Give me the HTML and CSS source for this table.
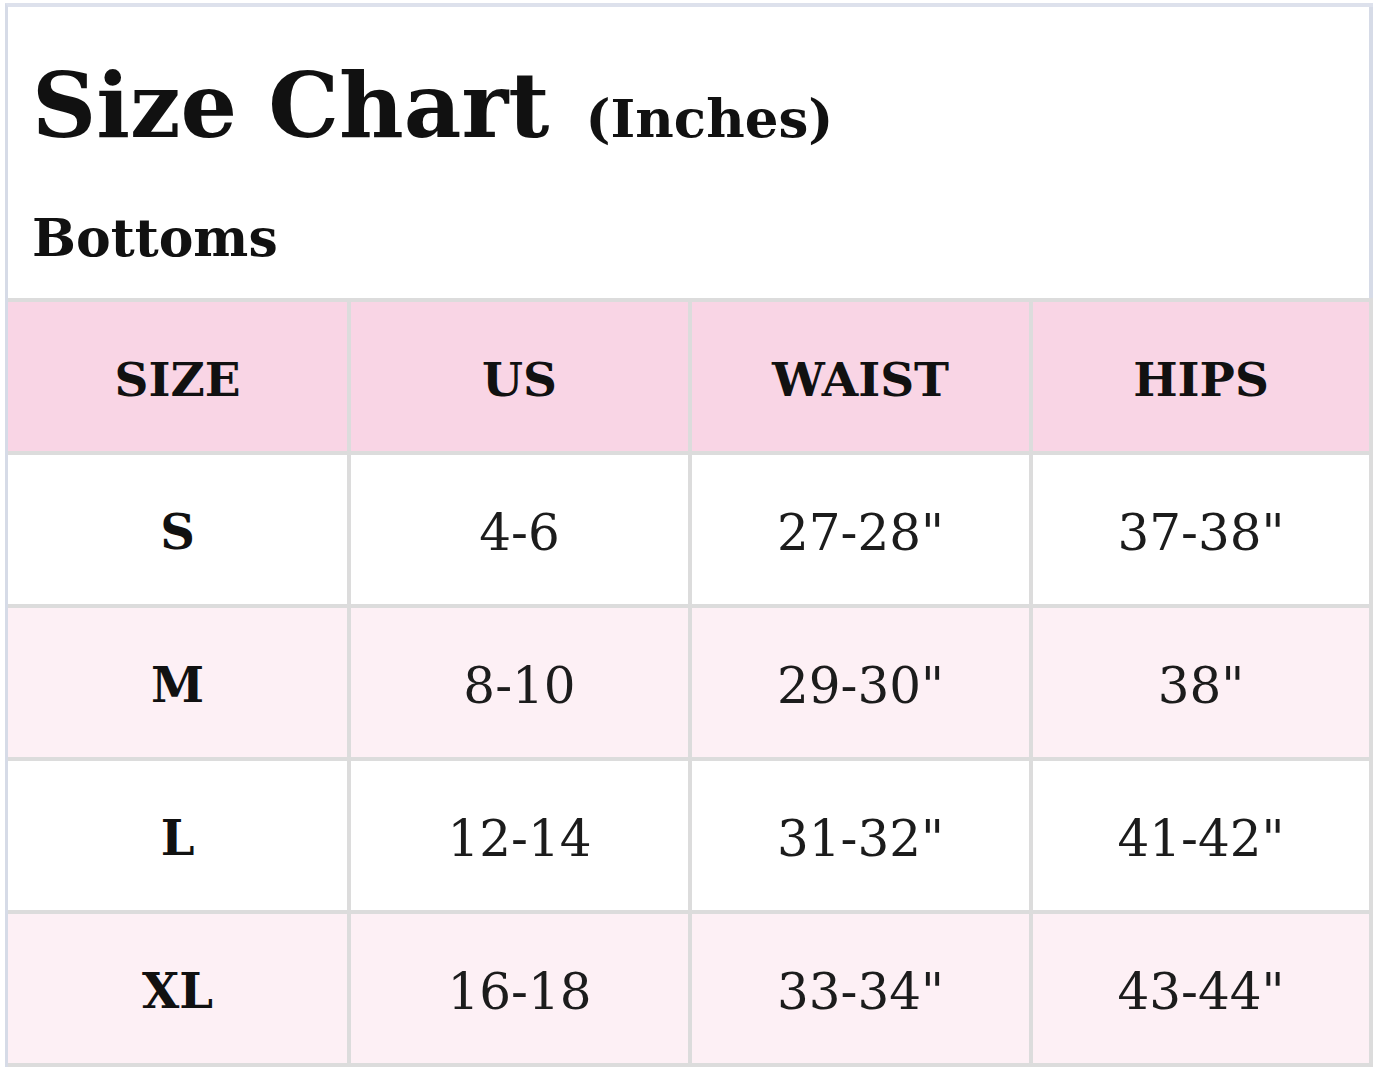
FILE: index.html
```html
<!DOCTYPE html>
<html lang="en">
<head>
<meta charset="utf-8">
<title>Size Chart</title>
<link rel="stylesheet" href="styles.css">
</head>
<body>
<div class="sheet">
  <header class="intro">
    <h1 class="title"><span class="title-main">Size Chart</span><span class="title-unit">(Inches)</span></h1>
    <h2 class="subtitle">Bottoms</h2>
  </header>
  <div class="chart">
    <div class="cell head">SIZE</div>
    <div class="cell head">US</div>
    <div class="cell head">WAIST</div>
    <div class="cell head">HIPS</div>

    <div class="cell label">S</div>
    <div class="cell num">4-6</div>
    <div class="cell num">27-28"</div>
    <div class="cell num">37-38"</div>

    <div class="cell label alt">M</div>
    <div class="cell num alt">8-10</div>
    <div class="cell num alt">29-30"</div>
    <div class="cell num alt">38"</div>

    <div class="cell label">L</div>
    <div class="cell num">12-14</div>
    <div class="cell num">31-32"</div>
    <div class="cell num">41-42"</div>

    <div class="cell label alt">XL</div>
    <div class="cell num alt">16-18</div>
    <div class="cell num alt">33-34"</div>
    <div class="cell num alt">43-44"</div>
  </div>
</div>
</body>
</html>
```

FILE: styles.css
```css
html, body {
  margin: 0;
  padding: 0;
  background: #ffffff;
}

body {
  font-family: "DejaVu Serif", "Liberation Serif", serif;
  color: #111111;
}

.sheet {
  margin: 3px 0 0 5px;
  width: 1368px;
  border-left: 3px solid #d6dbe7;
  border-top: 4px solid #dde1ec;
  box-sizing: border-box;
}

.intro {
  height: 291px;
  box-sizing: border-box;
  padding: 54px 0 0 24px;
  border-right: 4px solid #d6dbe7;
}

.title {
  margin: 0;
  display: flex;
  align-items: baseline;
  gap: 36px;
  font-weight: bold;
  line-height: 1;
}

.title-main {
  font-size: 89px;
}

.title-unit {
  font-size: 53px;
}

.subtitle {
  margin: 62px 0 0 0;
  font-size: 52px;
  font-weight: bold;
  line-height: 1;
}

.chart {
  display: grid;
  grid-template-columns: 339px 337px 337px 336px;
  grid-auto-rows: 149px;
  gap: 4px;
  padding: 4px 4px 4px 0;
  background: #dcdcdc;
}

.cell {
  display: flex;
  align-items: center;
  justify-content: center;
  background: #ffffff;
  line-height: 1;
}

.cell.alt {
  background: #fdf0f5;
}

.head {
  background: #f9d5e5;
  font-size: 47px;
  font-weight: bold;
  padding-top: 6px;
}

.label {
  font-size: 48px;
  font-weight: bold;
  padding-top: 4px;
}

.num {
  font-size: 50px;
  font-weight: normal;
  color: #1c1c1c;
  padding-top: 6px;
}
```
